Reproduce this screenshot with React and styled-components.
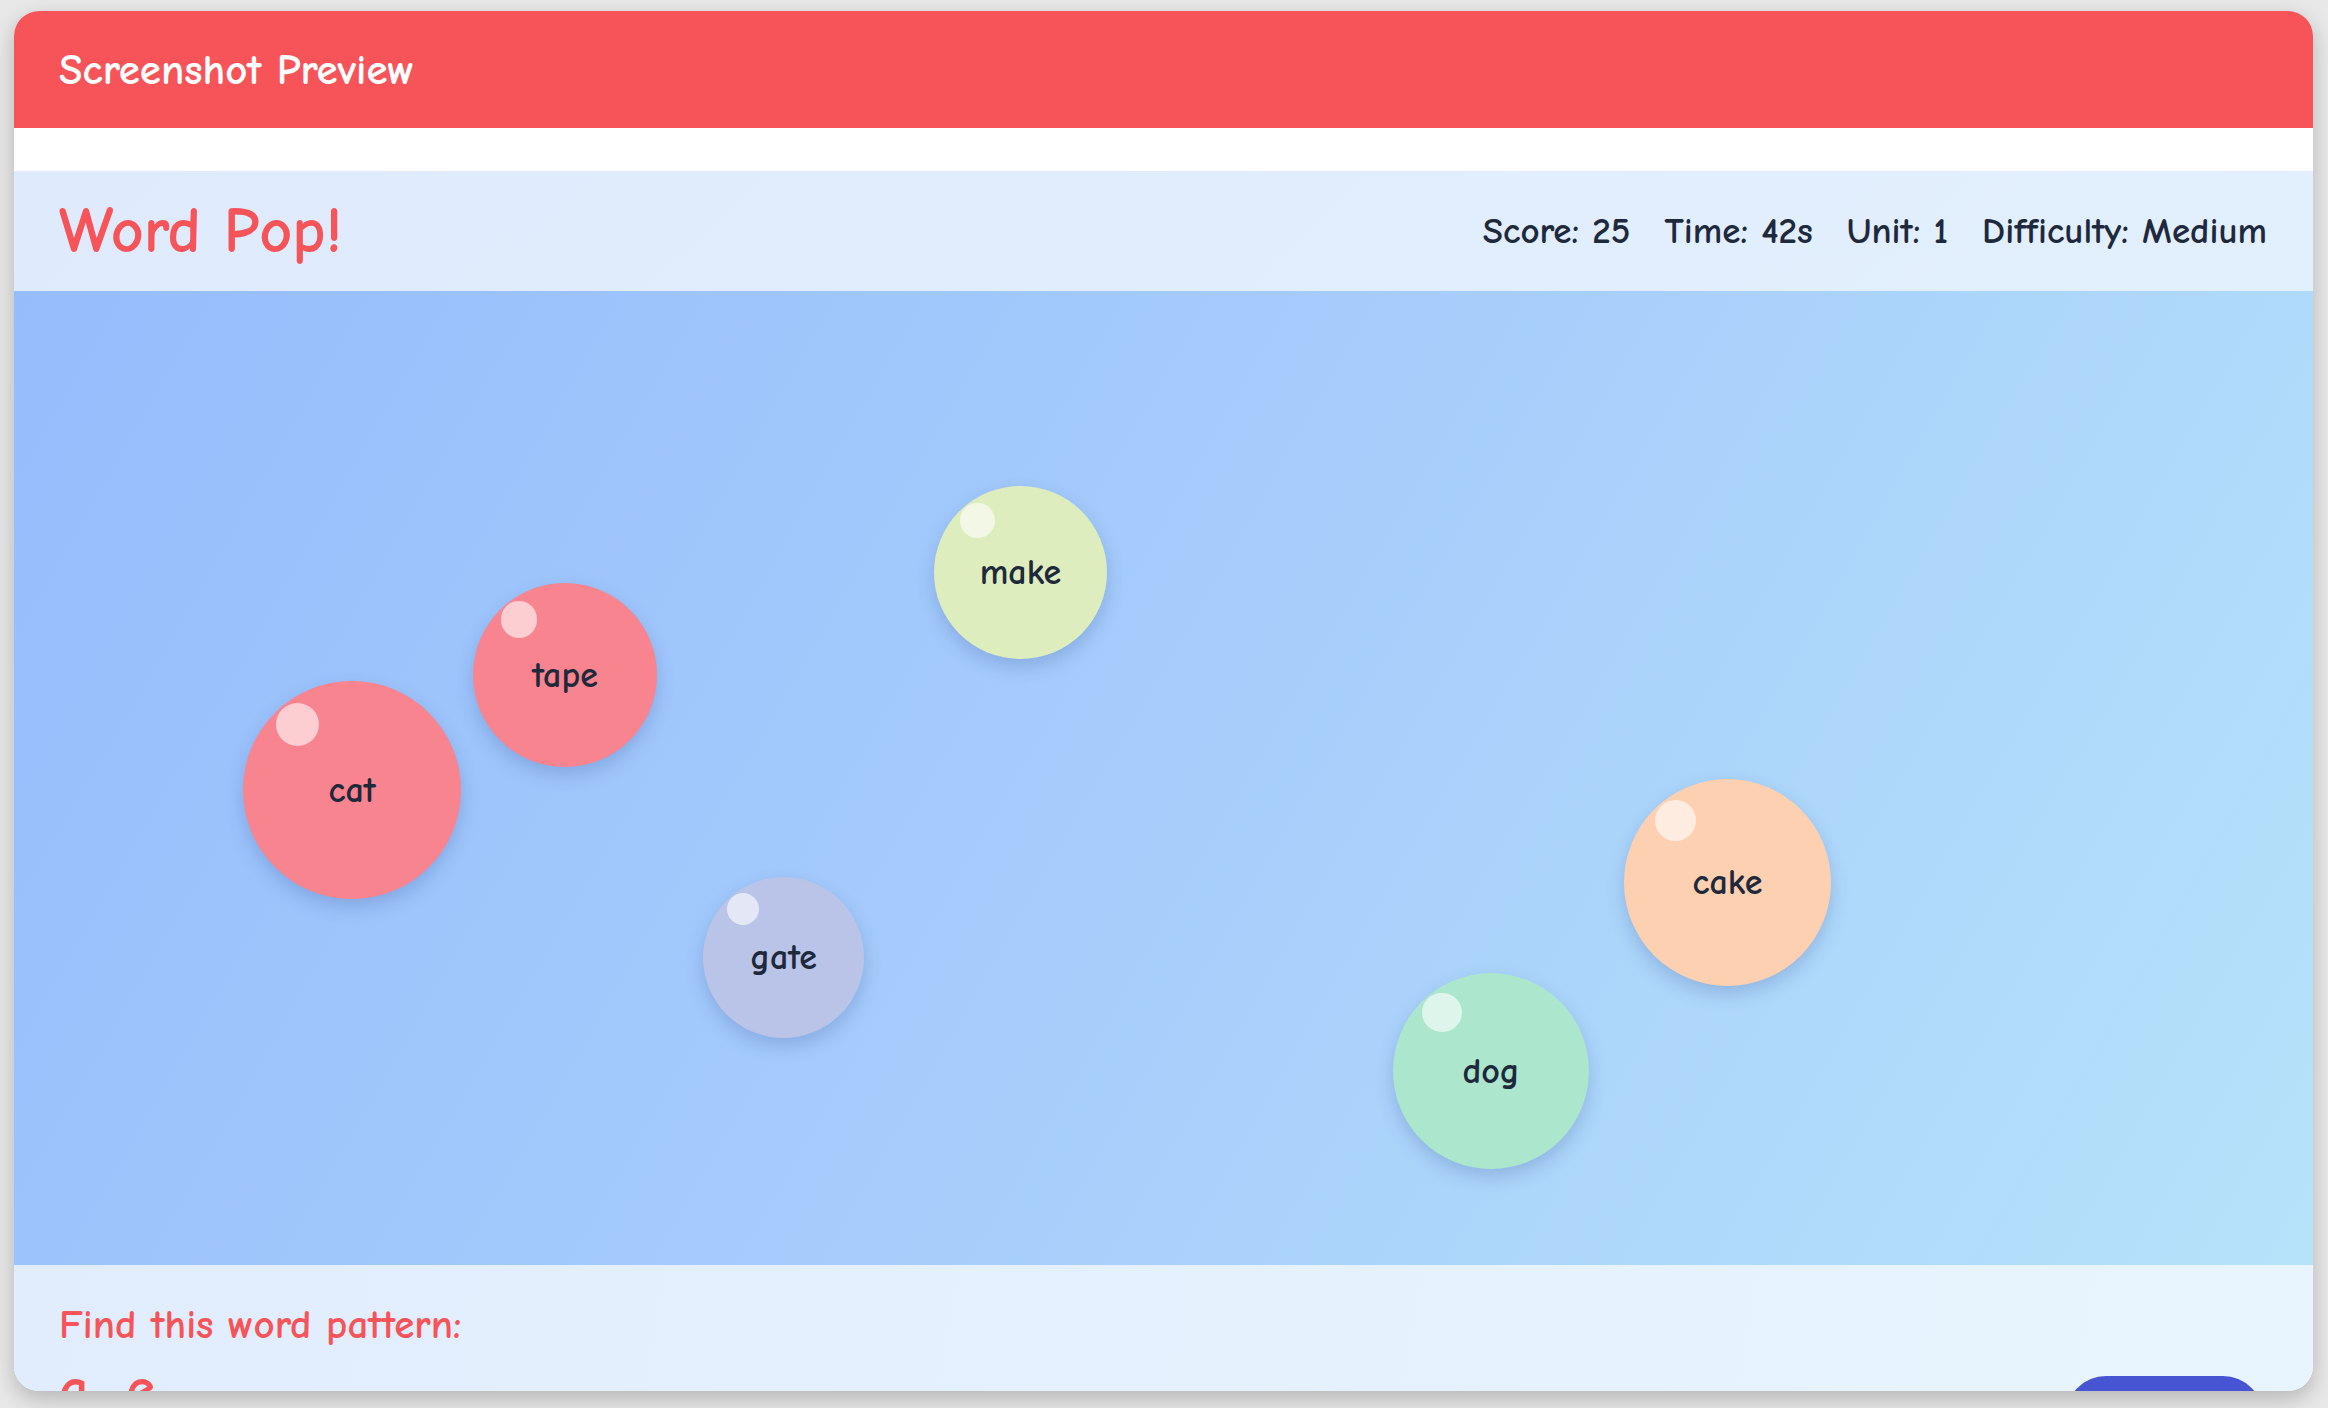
import styled, { createGlobalStyle } from "styled-components";

const GlobalStyle = createGlobalStyle`
    * {
        box-sizing: border-box;
    }
    body {
        margin: 0;
        background: #e8e8e8;
        font-family: "Comic Sans MS", "Comic Neue", "Noto Sans", sans-serif;
        color: #1e293b;
    }
`;

const bubbles = [
    { word: "make", x: 920, y: 195, size: 173, color: "#deedbd" },
    { word: "tape", x: 459, y: 292, size: 184, color: "#f7848f" },
    { word: "cat", x: 229, y: 390, size: 218, color: "#f7848f" },
    { word: "gate", x: 689, y: 586, size: 161, color: "#bac4e8" },
    { word: "cake", x: 1610, y: 488, size: 207, color: "#fdd0b1" },
    { word: "dog", x: 1379, y: 682, size: 196, color: "#abe6cd" },
];

const stats = ["Score: 25", "Time: 42s", "Unit: 1", "Difficulty: Medium"];

function App() {
    return (
        <Page>
            <GlobalStyle />
            <Card>
                <PreviewBar>Screenshot Preview</PreviewBar>
                <Spacer />
                <GameHeader>
                    <Title>Word Pop!</Title>
                    <Stats>
                        {stats.map((s) => (
                            <Stat key={s}>{s}</Stat>
                        ))}
                    </Stats>
                </GameHeader>
                <PlayArea>
                    {bubbles.map((b) => (
                        <Bubble key={b.word} $x={b.x} $y={b.y} $size={b.size} $color={b.color}>
                            {b.word}
                        </Bubble>
                    ))}
                </PlayArea>
                <Footer>
                    <Prompt>Find this word pattern:</Prompt>
                    <PatternRow>
                        <Pattern>a_e</Pattern>
                        <CheckButton type="button">Next</CheckButton>
                    </PatternRow>
                </Footer>
            </Card>
        </Page>
    );
}

export default App;

const Page = styled.div`
    width: 2328px;
    height: 1408px;
    padding: 11px 15px 0 14px;
`;

const Card = styled.div`
    display: flex;
    flex-direction: column;
    width: 2299px;
    height: 1380px;
    border-radius: 25px;
    overflow: hidden;
    background: #ffffff;
    box-shadow: 0 8px 22px rgba(0, 0, 0, 0.22);
`;

const PreviewBar = styled.div`
    flex: none;
    display: flex;
    align-items: center;
    height: 117px;
    padding: 0 45px;
    background: #f7545a;
    color: #ffffff;
    font-size: 43px;
    font-weight: 700;
`;

const Spacer = styled.div`
    flex: none;
    height: 43px;
    background: #ffffff;
`;

const GameHeader = styled.div`
    flex: none;
    display: flex;
    justify-content: space-between;
    align-items: center;
    height: 120px;
    padding: 0 46px 0 45px;
    background: linear-gradient(135deg, #dfebfc, #e2effd);
`;

const Title = styled.h1`
    margin: 0;
    font-size: 64px;
    font-weight: 700;
    color: #f7545a;
    line-height: 1;
`;

const Stats = styled.div`
    display: flex;
    gap: 34px;
`;

const Stat = styled.span`
    font-size: 37px;
    font-weight: 700;
    color: #1e293b;
`;

const PlayArea = styled.div`
    position: relative;
    flex: none;
    height: 974px;
    background: linear-gradient(120deg, #96bcfc 0%, #a6cdfb 50%, #b6e2fa 100%);
`;

const Bubble = styled.div`
    position: absolute;
    left: ${(p) => p.$x}px;
    top: ${(p) => p.$y}px;
    width: ${(p) => p.$size}px;
    height: ${(p) => p.$size}px;
    border-radius: 50%;
    background: ${(p) => p.$color};
    display: flex;
    align-items: center;
    justify-content: center;
    font-size: 36px;
    font-weight: 700;
    color: #1e293b;
    box-shadow: 0 8px 18px rgba(40, 70, 140, 0.22);

    &::before {
        content: "";
        position: absolute;
        top: 10%;
        left: 15%;
        width: 20%;
        height: 20%;
        border-radius: 50%;
        background: rgba(255, 255, 255, 0.6);
    }
`;

const Footer = styled.div`
    flex: 1;
    padding: 35px 50px 0 45px;
    background: linear-gradient(100deg, #e1edfd, #e8f5fe);
`;

const Prompt = styled.div`
    font-size: 41px;
    font-weight: 700;
    line-height: 1.2;
    color: #f7545a;
`;

const PatternRow = styled.div`
    display: flex;
    justify-content: space-between;
    align-items: flex-start;
    margin-top: 12px;
`;

const Pattern = styled.div`
    font-size: 58px;
    font-weight: 700;
    line-height: 1;
    letter-spacing: 4px;
    color: #f7545a;
`;

const CheckButton = styled.button`
    margin-top: 15px;
    width: 197px;
    height: 80px;
    border: none;
    border-radius: 40px;
    background: #4855d3;
    color: #ffffff;
    font-family: inherit;
    font-size: 32px;
    font-weight: 700;
    cursor: pointer;
`;
